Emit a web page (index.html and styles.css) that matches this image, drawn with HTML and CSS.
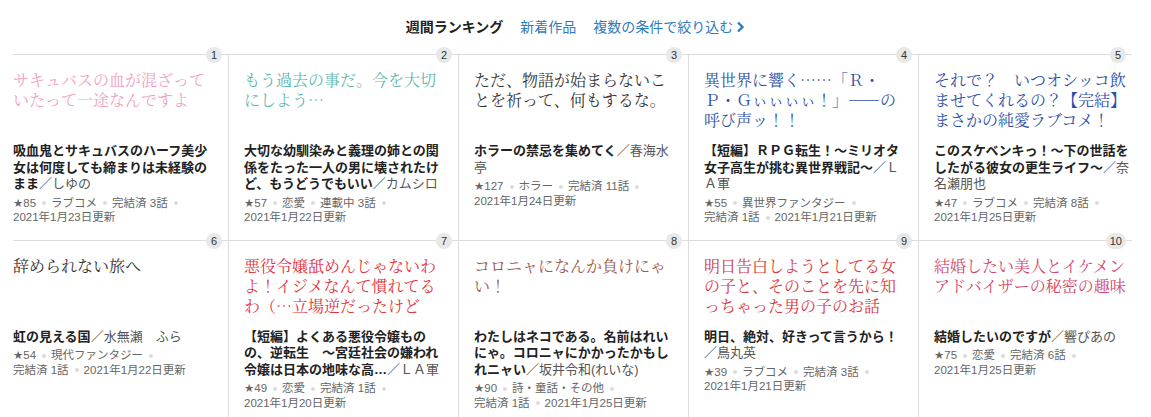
FILE: index.html
```html
<!DOCTYPE html>
<html lang="ja">
<head>
<meta charset="utf-8">
<title>週間ランキング</title>
<link rel="stylesheet" href="styles.css">
</head>
<body>
<nav class="tabs">
  <span class="tab tab-current">週間ランキング</span>
  <a class="tab" href="#">新着作品</a>
  <a class="tab" href="#">複数の条件で絞り込む<svg class="chev" width="9" height="12" viewBox="0 0 9 12"><polyline points="2,1.5 6.5,6 2,10.5" fill="none" stroke="currentColor" stroke-width="2.4"/></svg></a>
</nav>
<ol class="ranking">
  <li class="cell">
    <span class="rank">1</span>
    <p class="catch c-pink">サキュバスの血が混ざっていたって一途なんですよ</p>
    <p class="title"><b>吸血鬼とサキュバスのハーフ美少女は何度しても締まりは未経験のまま</b><span class="author">／しゆの</span></p>
    <ul class="meta"><li>★85</li><li>ラブコメ</li><li>完結済 3話</li><li>2021年1月23日更新</li></ul>
  </li>
  <li class="cell">
    <span class="rank">2</span>
    <p class="catch c-teal">もう過去の事だ。今を大切にしよう…</p>
    <p class="title"><b>大切な幼馴染みと義理の姉との関係をたった一人の男に壊されたけど、もうどうでもいい</b><span class="author">／カムシロ</span></p>
    <ul class="meta"><li>★57</li><li>恋愛</li><li>連載中 3話</li><li>2021年1月22日更新</li></ul>
  </li>
  <li class="cell">
    <span class="rank">3</span>
    <p class="catch c-dark">ただ、物語が始まらないことを祈って、何もするな。</p>
    <p class="title"><b>ホラーの禁忌を集めてく</b><span class="author">／春海水亭</span></p>
    <ul class="meta"><li>★127</li><li>ホラー</li><li>完結済 11話</li><li>2021年1月24日更新</li></ul>
  </li>
  <li class="cell">
    <span class="rank">4</span>
    <p class="catch c-navy">異世界に響く……「Ｒ・Ｐ・Ｇぃぃぃぃ！」――の呼び声ッ！！</p>
    <p class="title"><b>【短編】ＲＰＧ転生！～ミリオタ女子高生が挑む異世界戦記～</b><span class="author">／ＬＡ軍</span></p>
    <ul class="meta"><li>★55</li><li>異世界ファンタジー</li><li>完結済 1話</li><li>2021年1月21日更新</li></ul>
  </li>
  <li class="cell">
    <span class="rank">5</span>
    <p class="catch c-blue">それで？　いつオシッコ飲ませてくれるの？【完結】まさかの純愛ラブコメ！</p>
    <p class="title"><b>このスケベンキっ！～下の世話をしたがる彼女の更生ライフ～</b><span class="author">／奈名瀬朋也</span></p>
    <ul class="meta"><li>★47</li><li>ラブコメ</li><li>完結済 8話</li><li>2021年1月25日更新</li></ul>
  </li>
  <li class="cell">
    <span class="rank">6</span>
    <p class="catch c-dark">辞められない旅へ</p>
    <p class="title"><b>虹の見える国</b><span class="author">／水無瀬　ふら</span></p>
    <ul class="meta"><li>★54</li><li>現代ファンタジー</li><li>完結済 1話</li><li>2021年1月22日更新</li></ul>
  </li>
  <li class="cell">
    <span class="rank">7</span>
    <p class="catch c-red">悪役令嬢舐めんじゃないわよ！イジメなんて慣れてるわ（…立場逆だったけど</p>
    <p class="title"><b>【短編】よくある悪役令嬢ものの、逆転生　～宮廷社会の嫌われ令嬢は日本の地味な高…</b><span class="author">／ＬＡ軍</span></p>
    <ul class="meta"><li>★49</li><li>恋愛</li><li>完結済 1話</li><li>2021年1月20日更新</li></ul>
  </li>
  <li class="cell">
    <span class="rank">8</span>
    <p class="catch c-brown">コロニャになんか負けにゃい！</p>
    <p class="title"><b>わたしはネコである。名前はれいにゃ。コロニャにかかったかもしれニャい</b><span class="author">／坂井令和(れいな)</span></p>
    <ul class="meta"><li>★90</li><li>詩・童話・その他</li><li>完結済 1話</li><li>2021年1月25日更新</li></ul>
  </li>
  <li class="cell">
    <span class="rank">9</span>
    <p class="catch c-scarlet">明日告白しようとしてる女の子と、そのことを先に知っちゃった男の子のお話</p>
    <p class="title"><b>明日、絶対、好きって言うから！</b><span class="author">／鳥丸英</span></p>
    <ul class="meta"><li>★39</li><li>ラブコメ</li><li>完結済 3話</li><li>2021年1月21日更新</li></ul>
  </li>
  <li class="cell">
    <span class="rank">10</span>
    <p class="catch c-rose">結婚したい美人とイケメンアドバイザーの秘密の趣味</p>
    <p class="title"><b>結婚したいのですが</b><span class="author">／響ぴあの</span></p>
    <ul class="meta"><li>★75</li><li>恋愛</li><li>完結済 6話</li><li>2021年1月25日更新</li></ul>
  </li>
</ol>
</body>
</html>
```
FILE: styles.css
```css
html {
  overflow: hidden;
}
body {
  margin: 0;
  background: #fff;
  color: #222;
  font-family: "Liberation Sans", "DejaVu Sans", "Noto Sans CJK JP", sans-serif;
}
.tabs {
  height: 54px;
  display: flex;
  justify-content: center;
  align-items: center;
  gap: 17px;
  font-size: 14px;
  line-height: 20px;
}
.tab {
  color: #2f7bbd;
  text-decoration: none;
  display: flex;
  align-items: center;
}
.tab-current {
  color: #222;
  font-weight: bold;
}
.chev {
  margin-left: 3px;
}
.ranking {
  list-style: none;
  margin: 0 0 0 13px;
  padding: 0;
  display: grid;
  grid-template-columns: 215px 230px 230px 230px 214px;
}
.cell {
  position: relative;
  border-top: 1px solid #dcdcdc;
  border-left: 1px solid #dcdcdc;
  padding: 15px;
  min-width: 0;
}
.cell:nth-child(5n+1) {
  border-left: none;
  padding-left: 0;
}
.cell:nth-child(5n) {
  padding-right: 0;
}
.rank {
  position: absolute;
  top: -8px;
  right: 6px;
  min-width: 16px;
  height: 16px;
  padding: 0 4px;
  box-sizing: border-box;
  border-radius: 8px;
  background: #e8e8e8;
  color: #333;
  font-size: 11px;
  line-height: 16px;
  text-align: center;
}
.catch {
  margin: 0 0 13px;
  height: 60px;
  font-family: "Noto Serif CJK JP", "Liberation Serif", "Noto Sans CJK JP", serif;
  font-size: 16px;
  line-height: 20px;
}
.c-pink { color: #f19ec2; }
.c-teal { color: #5fb7b4; }
.c-dark { color: #333; }
.c-navy { color: #2d4fa6; }
.c-blue { color: #2c4ea8; }
.c-red { color: #e3353d; }
.c-brown { color: #9c5a4c; }
.c-scarlet { color: #d8363c; }
.c-rose { color: #d4476b; }
.title {
  margin: 0;
  font-size: 13px;
  line-height: 16.5px;
  color: #222;
}
.title b {
  font-weight: bold;
}
.author {
  color: #555;
}
.meta {
  list-style: none;
  margin: 3px 0 0;
  padding: 0;
  display: flex;
  flex-wrap: wrap;
  font-size: 11.5px;
  line-height: 14.5px;
  color: #666;
}
.meta li {
  white-space: nowrap;
}
.meta li:not(:last-child)::after {
  content: "";
  display: inline-block;
  width: 4px;
  height: 4px;
  border-radius: 50%;
  background: #dcdcdc;
  margin: 0 5px 0 6px;
  vertical-align: middle;
}
```
